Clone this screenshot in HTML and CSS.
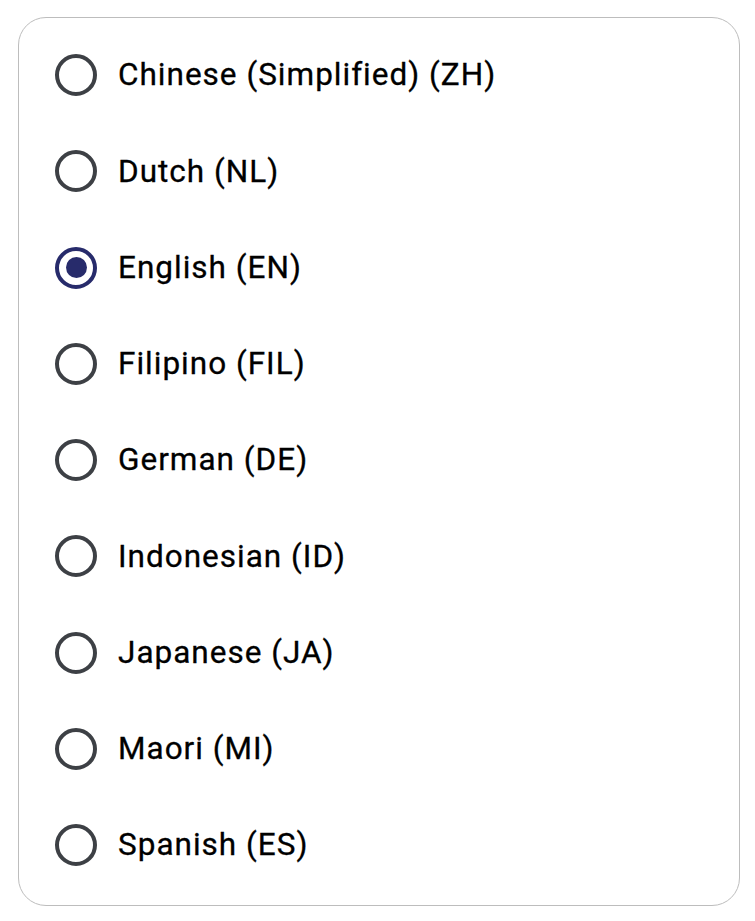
FILE: index.html
```html
<!DOCTYPE html>
<html lang="en">
<head>
<meta charset="utf-8">
<title>Language</title>
<link rel="stylesheet" href="styles.css">
</head>
<body>
<div class="card">
  <label class="row"><span class="radio"></span><span class="label">Chinese (Simplified) (ZH)</span></label>
  <label class="row"><span class="radio"></span><span class="label">Dutch (NL)</span></label>
  <label class="row"><span class="radio checked"></span><span class="label">English (EN)</span></label>
  <label class="row"><span class="radio"></span><span class="label">Filipino (FIL)</span></label>
  <label class="row"><span class="radio"></span><span class="label">German (DE)</span></label>
  <label class="row"><span class="radio"></span><span class="label">Indonesian (ID)</span></label>
  <label class="row"><span class="radio"></span><span class="label">Japanese (JA)</span></label>
  <label class="row"><span class="radio"></span><span class="label">Maori (MI)</span></label>
  <label class="row"><span class="radio"></span><span class="label">Spanish (ES)</span></label>
</div>
</body>
</html>
```
FILE: styles.css
```css
html, body {
  margin: 0;
  padding: 0;
  background: #ffffff;
}
body {
  padding: 17px 15px 15px 18px;
  font-family: Roboto, "Liberation Sans", sans-serif;
}
.card {
  border: 1px solid #bdbdbd;
  border-radius: 28px;
  padding: 9px 0 12px 36px;
  display: flex;
  flex-direction: column;
}
.row {
  height: 96.25px;
  display: flex;
  align-items: center;
  gap: 21px;
}
.radio {
  box-sizing: border-box;
  width: 42px;
  height: 42px;
  border: 4.5px solid #3d4045;
  border-radius: 50%;
  flex: none;
  display: flex;
  align-items: center;
  justify-content: center;
}
.radio.checked {
  border-color: #272b6b;
}
.radio.checked::after {
  content: "";
  width: 21px;
  height: 21px;
  border-radius: 50%;
  background: #272b6b;
}
.label {
  font-size: 31.5px;
  font-weight: 400;
  letter-spacing: 1px;
  color: #000000;
  line-height: 1;
  -webkit-text-stroke: 0.3px #000000;
}
```
